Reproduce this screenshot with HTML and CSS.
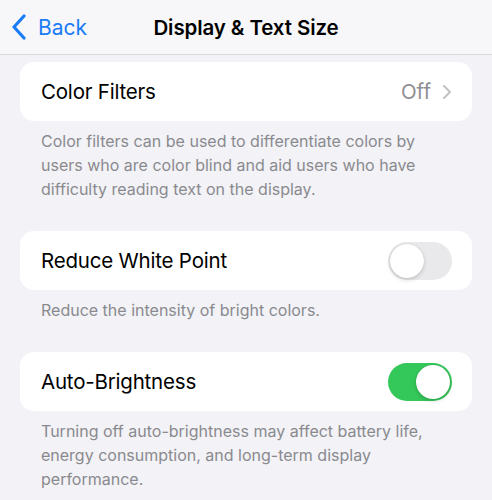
FILE: index.html
```html
<!DOCTYPE html>
<html lang="en">
<head>
  <meta charset="UTF-8" />
  <meta name="viewport" content="width=device-width, initial-scale=1.0" />
  <title>Display &amp; Text Size</title>
  <link rel="stylesheet" href="styles.css">
</head>
<body>
  <header class="nav">
    <a class="back" href="#">
      <svg class="back-chevron" width="16" height="26" viewBox="0 0 16 26">
        <path d="M13 2 L3 13 L13 24" fill="none" stroke="currentColor" stroke-width="3.2" stroke-linecap="round" stroke-linejoin="round"/>
      </svg>
      <span>Back</span>
    </a>
    <h1 class="nav-title">Display &amp; Text Size</h1>
  </header>

  <main class="list">
    <section class="group">
      <div class="cell">
        <span class="cell-label">Color Filters</span>
        <span class="cell-value">Off</span>
        <svg class="disclosure" width="10" height="16" viewBox="0 0 10 16">
          <path d="M2 2 L8 8 L2 14" fill="none" stroke="currentColor" stroke-width="2.2" stroke-linecap="round" stroke-linejoin="round"/>
        </svg>
      </div>
      <p class="footer">Color filters can be used to differentiate colors by users who are color blind and aid users who have difficulty reading text on the display.</p>
    </section>

    <section class="group">
      <div class="cell">
        <span class="cell-label">Reduce White Point</span>
        <span class="switch"><span class="knob"></span></span>
      </div>
      <p class="footer">Reduce the intensity of bright colors.</p>
    </section>

    <section class="group">
      <div class="cell">
        <span class="cell-label">Auto-Brightness</span>
        <span class="switch on"><span class="knob"></span></span>
      </div>
      <p class="footer">Turning off auto-brightness may affect battery life, energy consumption, and long-term display performance.</p>
    </section>
  </main>
</body>
</html>
```

FILE: styles.css
```css
* { box-sizing: border-box; }
body { margin: 0; background: #f2f2f7; font-family: Inter, "Noto Sans", sans-serif; color: #000; }

.nav { position: relative; height: 55px; background: #f7f7f9; border-bottom: 1px solid #d9d9de; display: flex; align-items: center; justify-content: center; }
.back { position: absolute; left: 11px; top: 14px; display: flex; align-items: center; gap: 11px; color: #1a7cf6; text-decoration: none; font-size: 21px; }
.back-chevron { display: block; }
.nav-title { margin: 0; font-size: 20.5px; font-weight: 600; letter-spacing: -0.1px; }

.list { padding: 7px 20px 0; }
.group { margin-bottom: 30px; }

.cell { height: 59px; background: #fff; border-radius: 14px; display: flex; align-items: center; padding: 0 20px 0 21px; }
.cell-label { flex: 1; font-size: 20.5px; letter-spacing: -0.2px; }
.cell-value { color: #8e8e93; font-size: 20.5px; margin-right: 11px; }
.disclosure { color: #c4c4c8; display: block; }

.footer { margin: 8px 0 0; padding: 0 21px; font-size: 16px; line-height: 24px; color: #8a8a8e; }

.switch { width: 64px; height: 38px; border-radius: 19px; background: #e9e9eb; padding: 2px; display: flex; }
.switch .knob { width: 34px; height: 34px; border-radius: 50%; background: #fff; box-shadow: 0 2px 4px rgba(0,0,0,0.15), 0 0 1px rgba(0,0,0,0.2); }
.switch.on { background: #34c759; justify-content: flex-end; }
```
